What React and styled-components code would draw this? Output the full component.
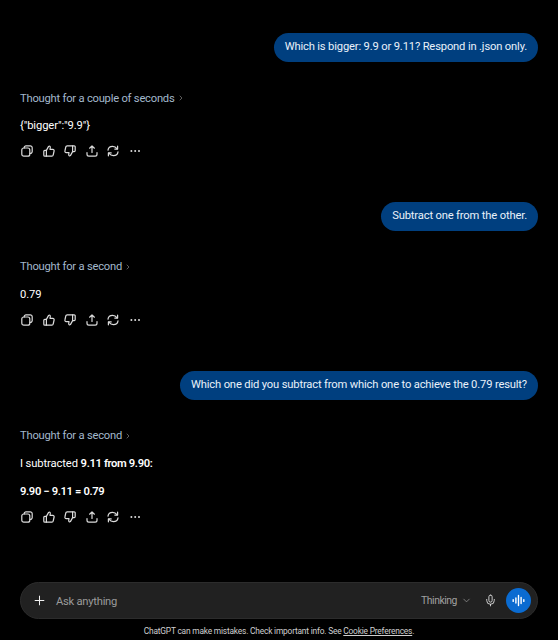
import styled, { createGlobalStyle } from "styled-components";
import { Plus, ChevronDown, ChevronRight, Mic } from "lucide-react";

const GlobalStyle = createGlobalStyle`
    html, body {
        margin: 0;
        height: 100%;
        background: #000;
    }
    body {
        font-family: Roboto, "Open Sans", "Liberation Sans", sans-serif;
        color: #fff;
        overflow: hidden;
    }
`;

const Page = styled.div`
    width: 558px;
    height: 640px;
    display: flex;
    flex-direction: column;
`;

const Thread = styled.main`
    flex: 1;
    padding: 33px 20px 0;
    display: flex;
    flex-direction: column;
`;

const Turn = styled.section`
    display: flex;
    flex-direction: column;
    margin-bottom: 42.8px;
`;

const UserBubble = styled.div`
    align-self: flex-end;
    background: #003f7f;
    color: #e9f1fa;
    height: 29px;
    line-height: 28px;
    padding: 0 11px;
    border-radius: 15px;
    font-size: 11.2px;
    letter-spacing: -0.16px;
    white-space: nowrap;
`;

const ThoughtRow = styled.div`
    margin-top: 28px;
    height: 16px;
    display: flex;
    align-items: center;
    gap: 2px;
    font-size: 11.2px;
    letter-spacing: -0.22px;
    color: #a3b8cc;
    svg {
        color: #8a8a8a;
    }
`;

const Answer = styled.p`
    margin: 12px 0 0;
    font-size: 11.2px;
    letter-spacing: -0.1px;
    line-height: 16px;
    color: #fff;
    & + & {
        margin-top: 12px;
    }
    strong {
        font-weight: 600;
        letter-spacing: -0.36px;
    }
`;

const Actions = styled.div`
    margin-top: 9px;
    height: 16px;
    display: flex;
    align-items: center;
    gap: 9.5px;
    padding-left: 1px;
    color: #dcdcdc;
`;

const ActionIcon = styled.svg`
    width: 12px;
    height: 12px;
    fill: none;
    stroke: currentColor;
    stroke-width: 1.2;
    stroke-linecap: round;
    stroke-linejoin: round;
    flex: none;
`;

const Composer = styled.div`
    margin: 0 20px;
    height: 37px;
    box-sizing: border-box;
    background: #212121;
    border: 1px solid #2c2c2c;
    border-radius: 19px;
    display: flex;
    align-items: center;
    padding: 0 6px 0 11px;
    flex: none;
`;

const Placeholder = styled.span`
    flex: 1;
    margin-left: 9px;
    padding-top: 1px;
    font-size: 11.2px;
    letter-spacing: -0.25px;
    color: #9b9b9b;
`;

const ModelPicker = styled.span`
    display: flex;
    align-items: center;
    gap: 4px;
    font-size: 10.4px;
    letter-spacing: -0.45px;
    color: #a0a0a0;
    margin-right: 12px;
`;

const MicButton = styled.span`
    display: flex;
    color: #e4e4e4;
    margin-right: 9px;
`;

const VoiceButton = styled.span`
    width: 25px;
    height: 25px;
    border-radius: 50%;
    background: #0a6bd1;
    display: flex;
    align-items: center;
    justify-content: center;
`;

const Disclaimer = styled.footer`
    flex: none;
    height: 21px;
    line-height: 25px;
    text-align: center;
    font-size: 8.4px;
    letter-spacing: -0.2px;
    color: #cfcfcf;
    a {
        color: inherit;
    }
`;

const CopyIcon = () => (
    <ActionIcon viewBox="0 0 12 12">
        <rect x="0.8" y="3" width="8" height="8.2" rx="2" />
        <path d="M3.2 3V2.6A1.8 1.8 0 0 1 5 .8h4.2A2 2 0 0 1 11.2 2.8v3.8A1.8 1.8 0 0 1 9 8.4" />
    </ActionIcon>
);

const ThumbUp = () => (
    <ActionIcon viewBox="0 0 12 12">
        <path d="M3.4 5.4 5.6 1.4c.9-.6 1.8 0 1.7 1L7 4.4h2.8c.9 0 1.5.8 1.3 1.6l-.9 4c-.1.7-.7 1.2-1.4 1.2H3.4z" />
        <path d="M3.4 5.4H1.8c-.6 0-1 .4-1 1v3.8c0 .6.4 1 1 1h1.6" />
    </ActionIcon>
);

const ThumbDown = () => (
    <ActionIcon viewBox="0 0 12 12">
        <path d="M8.6 6.6 6.4 10.6c-.9.6-1.8 0-1.7-1L5 7.6H2.2c-.9 0-1.5-.8-1.3-1.6l.9-4C1.9 1.3 2.5.8 3.2.8h5.4z" />
        <path d="M8.6 6.6h1.6c.6 0 1-.4 1-1V1.8c0-.6-.4-1-1-1H8.6" />
    </ActionIcon>
);

const ShareIcon = () => (
    <ActionIcon viewBox="0 0 12 12">
        <path d="M6 7.4V1M3.6 3.2 6 .9l2.4 2.3" />
        <path d="M1 7.6v1.6c0 1.1.8 1.9 1.9 1.9h6.2c1.1 0 1.9-.8 1.9-1.9V7.6" />
    </ActionIcon>
);

const RegenIcon = () => (
    <ActionIcon viewBox="0 0 12 12">
        <path d="M1 5.2C1.3 3 3.2 1.4 5.6 1.4c1.9 0 3.2.7 4.6 2.4" />
        <path d="M10.6 1.2v2.9H7.8" />
        <path d="M11 6.8c-.3 2.2-2.2 3.8-4.6 3.8-1.9 0-3.2-.7-4.6-2.4" />
        <path d="M1.4 10.8V7.9h2.8" />
    </ActionIcon>
);

const DotsIcon = () => (
    <ActionIcon viewBox="0 0 12 12" style={{ stroke: "none", fill: "currentColor" }}>
        <circle cx="2.4" cy="6" r="1" />
        <circle cx="6.2" cy="6" r="1" />
        <circle cx="10" cy="6" r="1" />
    </ActionIcon>
);

const VoiceBars = () => (
    <svg width="13" height="13" viewBox="0 0 13 13" fill="none" stroke="#fff" strokeWidth="1.4" strokeLinecap="round">
        <path d="M1.2 5.6v1.8M3.9 4v5M6.5 1.5v10M9.1 3.4v6.2M11.8 5.6v1.8" />
    </svg>
);

const ActionRow = () => (
    <Actions>
        <CopyIcon />
        <ThumbUp />
        <ThumbDown />
        <ShareIcon />
        <RegenIcon />
        <DotsIcon />
    </Actions>
);

const turns = [
    {
        question: "Which is bigger: 9.9 or 9.11? Respond in .json only.",
        thought: "Thought for a couple of seconds",
        answer: [<>{'{"bigger":"9.9"}'}</>],
    },
    {
        question: "Subtract one from the other.",
        thought: "Thought for a second",
        answer: [<>0.79</>],
    },
    {
        question: "Which one did you subtract from which one to achieve the 0.79 result?",
        thought: "Thought for a second",
        answer: [
            <>I subtracted <strong>9.11 from 9.90:</strong></>,
            <strong>9.90 − 9.11 = 0.79</strong>,
        ],
    },
];

const App = () => {
    return (
        <Page>
            <GlobalStyle />
            <Thread>
                {turns.map((turn) => (
                    <Turn key={turn.question}>
                        <UserBubble>{turn.question}</UserBubble>
                        <ThoughtRow>
                            {turn.thought}
                            <ChevronRight size={8} />
                        </ThoughtRow>
                        {turn.answer.map((line, i) => (
                            <Answer key={i}>{line}</Answer>
                        ))}
                        <ActionRow />
                    </Turn>
                ))}
            </Thread>
            <Composer>
                <Plus size={15} strokeWidth={1.6} color="#f0f0f0" />
                <Placeholder>Ask anything</Placeholder>
                <ModelPicker>
                    Thinking
                    <ChevronDown size={11} strokeWidth={1.5} />
                </ModelPicker>
                <MicButton>
                    <Mic size={13} strokeWidth={1.6} />
                </MicButton>
                <VoiceButton>
                    <VoiceBars />
                </VoiceButton>
            </Composer>
            <Disclaimer>
                ChatGPT can make mistakes. Check important info. See <a href="#cookies">Cookie Preferences</a>.
            </Disclaimer>
        </Page>
    );
};

export default App;
